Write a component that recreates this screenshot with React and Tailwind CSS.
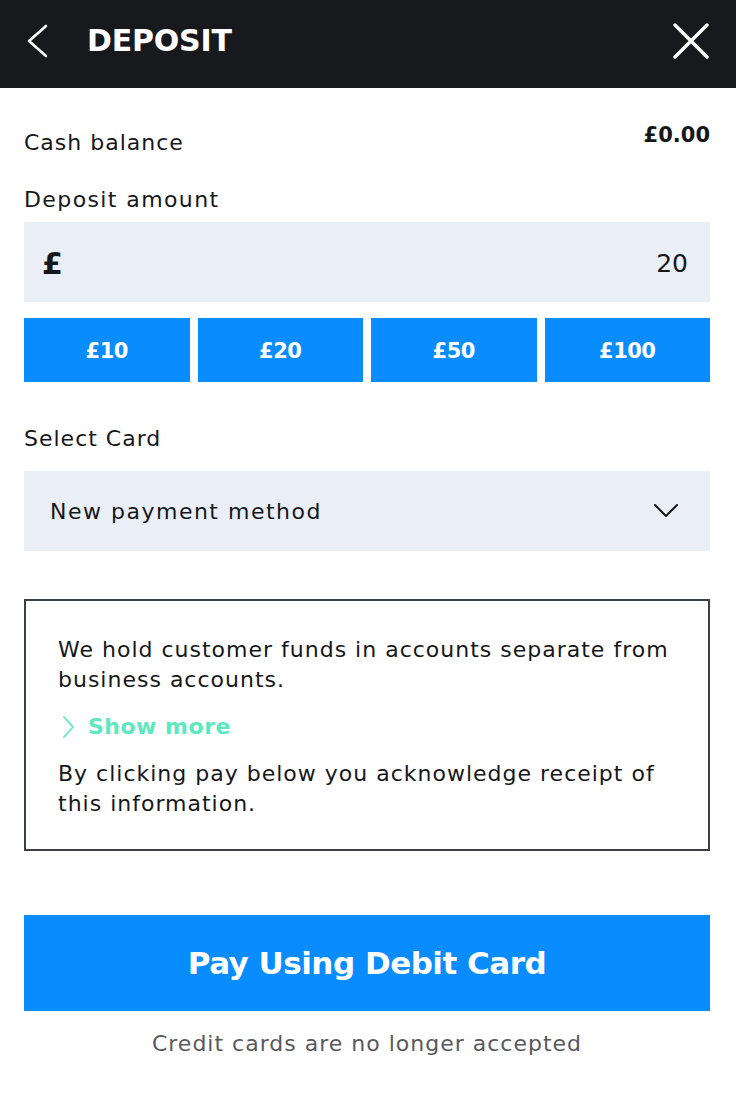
import React, { useState } from 'react';

export default function App() {
  const [amount, setAmount] = useState('20');
  const [more, setMore] = useState(false);

  return (
    <div className="w-[736px] min-h-[1100px] bg-white text-[#16171a] font-['DejaVu_Sans',sans-serif]">
      <header className="h-[88px] bg-[#18191d] flex items-center pl-[26px] pr-[27px] pb-[7px] text-white">
        <button className="w-[24px] h-[40px] flex items-center justify-start">
          <svg width="22" height="34" viewBox="0 0 22 34" fill="none" stroke="white" strokeWidth="2.6" strokeLinecap="round" strokeLinejoin="round">
            <path d="M20 2 L3 17 L20 32" />
          </svg>
        </button>
        <h1 className="ml-[37px] text-[30px] font-bold tracking-[-0.2px] leading-none">DEPOSIT</h1>
        <button className="ml-auto w-[36px] h-[36px] flex items-center justify-center">
          <svg width="36" height="36" viewBox="0 0 36 36" fill="none" stroke="white" strokeWidth="3.4" strokeLinecap="round">
            <path d="M2 2 L34 34 M34 2 L2 34" />
          </svg>
        </button>
      </header>

      <main className="pl-[24px] pr-[26px]">
        <div className="flex justify-between items-start pt-[33px]">
          <span className="text-[22px] leading-[28px] pt-[8px] tracking-[1px]">Cash balance</span>
          <span className="text-[21px] leading-[28px] font-bold">£0.00</span>
        </div>

        <label className="block mt-[29px] text-[22px] leading-[28px] tracking-[1.4px]">Deposit amount</label>
        <div className="mt-[8px] h-[80px] bg-[#eaeef7] flex items-center px-[18px] pt-[3px]">
          <span className="text-[30px] font-bold">£</span>
          <input
            className="flex-1 bg-transparent text-right text-[25px] pr-[4px] outline-none"
            value={amount}
            onChange={e => setAmount(e.target.value)}
          />
        </div>

        <div className="mt-[16px] grid grid-cols-4 gap-[8px]">
          {['10', '20', '50', '100'].map(v => (
            <button
              key={v}
              onClick={() => setAmount(v)}
              className="h-[64px] pt-[4px] bg-[#088cfe] text-white text-[21px] font-bold tracking-[-0.5px]"
            >
              £{v}
            </button>
          ))}
        </div>

        <label className="block mt-[43px] text-[22px] leading-[28px] tracking-[1px]">Select Card</label>
        <div className="mt-[18px] h-[80px] bg-[#eaeef7] flex items-center justify-between pl-[26px] pr-[32px]">
          <span className="text-[22px] tracking-[1.5px]">New payment method</span>
          <svg width="24" height="14" viewBox="0 0 24 14" fill="none" stroke="#16171a" strokeWidth="2" strokeLinecap="round" strokeLinejoin="round">
            <path d="M1 1 L12 12 L23 1" />
          </svg>
        </div>

        <div className="mt-[48px] border-2 border-[#3b4048] pl-[32px] pr-[24px] pt-[34px] h-[252px]">
          <p className="text-[22px] leading-[30px] tracking-[1px]">We hold customer funds in accounts separate from business accounts.</p>
          <button onClick={() => setMore(!more)} className="mt-[17px] flex items-center text-[22px] leading-[30px] font-bold text-[#5de8bf]">
            <svg className="ml-[4px]" width="12" height="22" viewBox="0 0 12 22" fill="none" stroke="#5de8bf" strokeWidth="1.8" strokeLinecap="round" strokeLinejoin="round">
              <path d="M2 1 L11 11 L2 21" />
            </svg>
            <span className="ml-[14px] tracking-[0.5px]">Show more</span>
          </button>
          <p className="mt-[17px] text-[22px] leading-[30px] tracking-[1px]">By clicking pay below you acknowledge receipt of this information.</p>
        </div>

        <button className="mt-[64px] w-full h-[96px] bg-[#088cfe] text-white text-[31px] font-bold tracking-[-0.5px]">
          Pay Using Debit Card
        </button>
        <p className="mt-[19px] text-center text-[22px] leading-[28px] tracking-[1px] text-[#58595c]">Credit cards are no longer accepted</p>
      </main>
    </div>
  );
}
